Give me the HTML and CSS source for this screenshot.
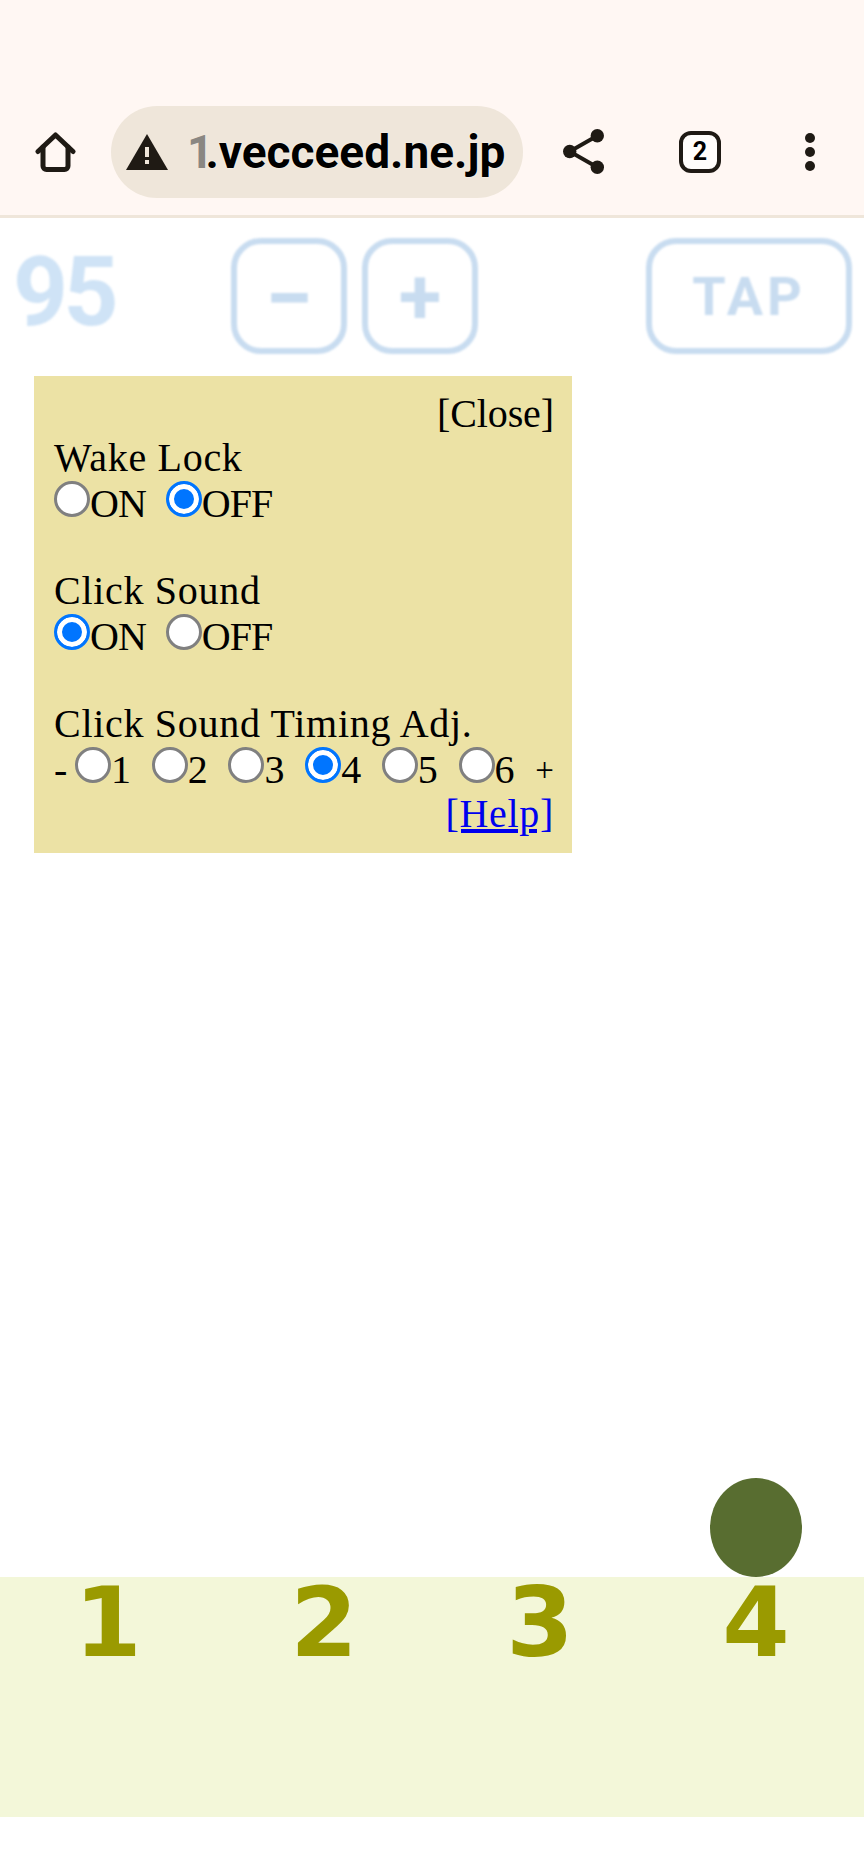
FILE: index.html
```html
<!DOCTYPE html>
<html lang="en">
<head>
  <meta charset="UTF-8" />
  <title>Metronome</title>
  <link rel="stylesheet" href="styles.css">
</head>
<body>
  <!-- Browser toolbar -->
  <header class="toolbar">
    <svg class="home-icon" viewBox="0 0 42 42"><path d="M3 20.5 L20.5 4 L38 20.5" /><path d="M8 16 V35 a3.5 3.5 0 0 0 3.5 3.5 H29.5 a3.5 3.5 0 0 0 3.5 -3.5 V16" /></svg>
    <div class="url-pill">
      <svg class="warn-icon" viewBox="0 0 42 36"><path class="warn-bg" d="M21 0 L42 36 H0 Z" /><rect class="warn-mark" x="19" y="13" width="4" height="10" /><rect class="warn-mark" x="19" y="26" width="4" height="4" /></svg>
      <span class="url"><span class="url-fade">1</span>.vecceed.ne.jp</span>
    </div>
    <svg class="share-icon" viewBox="0 0 41 45"><path class="share-line" d="M34.3 6.7 L6.7 22.5 L34.3 38.3" /><circle cx="34.3" cy="6.7" r="6.7" /><circle cx="6.7" cy="22.5" r="6.7" /><circle cx="34.3" cy="38.3" r="6.7" /></svg>
    <div class="tabs-btn">2</div>
    <div class="menu-dots"><span></span><span></span><span></span></div>
  </header>

  <!-- Tempo row -->
  <div class="tempo-row">
    <div class="bpm">95</div>
    <div class="step-btn minus">−</div>
    <div class="step-btn">+</div>
    <div class="tap-btn">TAP</div>
  </div>

  <!-- Settings panel -->
  <div class="panel">
    <div class="right close">[Close]</div>
    <div>Wake Lock</div>
    <div class="options">
      <label class="opt word"><input type="radio" name="wake">ON</label>
      <label class="opt word"><input type="radio" name="wake" checked>OFF</label>
    </div>
    <div class="blank"></div>
    <div>Click Sound</div>
    <div class="options">
      <label class="opt word"><input type="radio" name="click" checked>ON</label>
      <label class="opt word"><input type="radio" name="click">OFF</label>
    </div>
    <div class="blank"></div>
    <div>Click Sound Timing Adj.</div>
    <div class="options">
      <span class="dash">-</span>
      <label class="opt"><input type="radio" name="adj">1</label>
      <label class="opt"><input type="radio" name="adj">2</label>
      <label class="opt"><input type="radio" name="adj">3</label>
      <label class="opt"><input type="radio" name="adj" checked>4</label>
      <label class="opt"><input type="radio" name="adj">5</label>
      <label class="opt"><input type="radio" name="adj">6</label>
      <span class="plus">+</span>
    </div>
    <div class="right"><a href="#">[Help]</a></div>
  </div>

  <!-- Beat band -->
  <div class="beats">
    <div class="beat">1</div>
    <div class="beat">2</div>
    <div class="beat">3</div>
    <div class="beat">4<span class="ball"></span></div>
  </div>
</body>
</html>
```

FILE: styles.css
```css
html, body {
  margin: 0;
  height: 1872px;
  background: #fff;
}

body {
  display: flex;
  flex-direction: column;
  overflow: hidden;
}

/* toolbar */
.toolbar {
  box-sizing: border-box;
  height: 218px;
  flex: none;
  background: #fff7f3;
  border-bottom: 3px solid #efe6da;
  display: flex;
  align-items: center;
  padding: 88px 0 0 35px;
}

.home-icon {
  width: 42px;
  height: 42px;
  flex: none;
  fill: none;
  stroke: #1f1a14;
  stroke-width: 5;
  stroke-linecap: round;
  stroke-linejoin: round;
}

.url-pill {
  box-sizing: border-box;
  width: 412px;
  height: 92px;
  flex: none;
  margin-left: 34px;
  border-radius: 46px;
  background: #efe6da;
  display: flex;
  align-items: center;
  padding-left: 15px;
}

.warn-icon {
  width: 42px;
  height: 36px;
  flex: none;
}

.warn-bg {
  fill: #1f1a14;
}

.warn-mark {
  fill: #efe6da;
}

.url {
  margin-left: 19px;
  font-family: Roboto, sans-serif;
  font-weight: 700;
  font-size: 46px;
  color: #000;
  white-space: nowrap;
  text-shadow: 0 0 2px #fff;
}

.url-fade {
  letter-spacing: -8px;
  padding-right: 8px;
  margin-right: -8px;
  color: #8a8782;
  text-shadow: none;
}

.share-icon {
  width: 41px;
  height: 45px;
  flex: none;
  margin-left: 40px;
  fill: #1f1a14;
}

.share-line {
  fill: none;
  stroke: #1f1a14;
  stroke-width: 4;
}

.tabs-btn {
  box-sizing: border-box;
  width: 42px;
  height: 42px;
  flex: none;
  margin-left: 75px;
  border: 4px solid #1f1a14;
  border-radius: 12px;
  font-family: Roboto, sans-serif;
  font-weight: 700;
  font-size: 25px;
  line-height: 34px;
  text-align: center;
  color: #000;
  background: #fffdfb;
}

.menu-dots {
  flex: none;
  margin-left: 84px;
  display: flex;
  flex-direction: column;
  gap: 4px;
}

.menu-dots span {
  width: 10px;
  height: 10px;
  border-radius: 50%;
  background: #1f1a14;
}

/* tempo row */
.tempo-row {
  flex: none;
  height: 116px;
  margin-top: 20px;
  display: flex;
  align-items: center;
  font-family: Roboto, sans-serif;
  font-weight: 700;
  filter: blur(1px);
}

.bpm {
  width: 231px;
  flex: none;
  box-sizing: border-box;
  padding: 0 0 8px 13px;
  font-size: 96px;
  letter-spacing: -4.5px;
  color: #cfe3f6;
}

.step-btn, .tap-btn {
  box-sizing: border-box;
  height: 116px;
  flex: none;
  border: 6px solid #c8dcf0;
  border-radius: 30px;
  display: flex;
  align-items: center;
  justify-content: center;
  color: #c8dcf0;
}

.step-btn {
  width: 116px;
  margin-right: 15px;
  font-size: 78px;
}

.minus {
  font-size: 86px;
  padding-top: 4px;
}

.tap-btn {
  width: 206px;
  margin-left: 153px;
  font-size: 54px;
  letter-spacing: 4px;
}

/* settings panel */
.panel {
  box-sizing: border-box;
  width: 538px;
  height: 477px;
  flex: none;
  margin: 22px 0 0 34px;
  padding: 16px 18px 0 20px;
  background: #ece2a5;
  font-family: "Liberation Serif", serif;
  font-size: 40px;
  letter-spacing: 0.7px;
  line-height: 44px;
  color: #000;
}

.right {
  text-align: right;
}

.close {
  letter-spacing: -0.1px;
}

.blank {
  height: 43px;
}

.options {
  display: flex;
  height: 46px;
  line-height: 48px;
}

.dash {
  margin-right: 7px;
}

.plus {
  margin-left: auto;
  font-size: 33px;
}

.opt {
  display: flex;
  margin-right: 20px;
}

.word {
  letter-spacing: -1px;
}

.opt input {
  appearance: none;
  box-sizing: border-box;
  width: 36px;
  height: 36px;
  margin: 1px 0 0;
  flex: none;
  border: 3px solid #808080;
  border-radius: 50%;
  background: #fff;
}

.opt input:checked {
  border-color: #0075ff;
  background: #0075ff;
  box-shadow: inset 0 0 0 5px #fff;
}

a {
  color: #0000ee;
}

/* beats */
.beats {
  position: relative;
  height: 240px;
  flex: none;
  margin-top: auto;
  margin-bottom: 55px;
  background: #f3f7d9;
  display: flex;
}

.beat {
  position: relative;
  flex: 1;
  text-align: center;
  font-family: "DejaVu Sans", sans-serif;
  font-weight: 700;
  font-size: 97px;
  line-height: 91px;
  color: #9a9a00;
}

.ball {
  position: absolute;
  left: 62px;
  bottom: 100%;
  width: 92px;
  height: 99px;
  border-radius: 50%;
  background: #586d30;
}
```
